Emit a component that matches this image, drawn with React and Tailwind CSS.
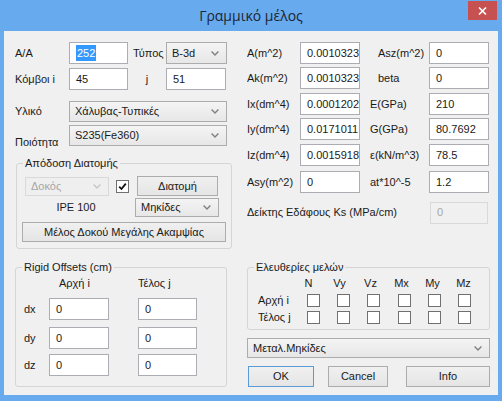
import React from 'react'

const ui = "font-['Liberation_Sans',Arial,sans-serif] text-[11px] text-[#1a1a1a]"

function Chevron({ disabled }) {
  return (
    <svg width="8" height="5" viewBox="0 0 8 5" className="shrink-0">
      <path d="M0.6 0.6 L4 4 L7.4 0.6" fill="none" stroke={disabled ? '#c6c6c6' : '#808080'} strokeWidth="1.4" />
    </svg>
  )
}

function Combo({ value, className = '', disabled }) {
  return (
    <div
      className={`flex items-center justify-between border pl-[5px] pr-[7px] whitespace-nowrap ${
        disabled
          ? 'border-[#d9d9d9] bg-[#efefef] text-[#a6a6a6]'
          : 'border-[#acacac] bg-gradient-to-b from-[#f4f4f4] to-[#e7e7e7]'
      } ${className}`}
    >
      <span>{value}</span>
      <Chevron disabled={disabled} />
    </div>
  )
}

function Input({ value, className = '', disabled, children }) {
  return (
    <div
      className={`flex items-center border pl-[6px] h-[22px] whitespace-nowrap ${
        disabled ? 'border-[#d9d9d9] bg-[#f0f0f0] text-[#a6a6a6]' : 'border-[#abadb3] bg-white'
      } ${className}`}
    >
      {children ?? value}
    </div>
  )
}

function Button({ label, className = '', primary }) {
  return (
    <div
      className={`flex items-center justify-center border bg-gradient-to-b from-[#f0f0f0] to-[#e5e5e5] whitespace-nowrap ${
        primary ? 'border-[#5b9bd5]' : 'border-[#acacac]'
      } ${className}`}
    >
      {label}
    </div>
  )
}

function Check({ checked }) {
  return (
    <div className="w-[13px] h-[13px] border border-[#707070] bg-white flex items-center justify-center shrink-0">
      {checked && (
        <svg width="9" height="9" viewBox="0 0 9 9">
          <path d="M1.2 4.6 L3.5 7 L7.8 1.6" fill="none" stroke="#111" strokeWidth="1.8" />
        </svg>
      )}
    </div>
  )
}

function Group({ title, className = '', children }) {
  return (
    <div className={`relative border border-[#d5d5d5] rounded-[3px] ${className}`}>
      <span className="absolute left-[6px] top-[-8px] px-[2px] bg-[#f0f0f0] leading-[14px] whitespace-nowrap">{title}</span>
      {children}
    </div>
  )
}

const props = [
  { l: 'A(m^2)', v: '0.0010323', l2: 'Asz(m^2)', v2: '0', pad: 'pl-[18px]', mt: 'mt-[11px]' },
  { l: 'Ak(m^2)', v: '0.0010323', l2: 'beta', v2: '0', pad: 'pl-[18px]', mt: 'mt-[3px]' },
  { l: 'Ix(dm^4)', v: '0.0001202', l2: 'E(GPa)', v2: '210', pad: 'pl-[10px]', mt: 'mt-[4px]' },
  { l: 'Iy(dm^4)', v: '0.0171011', l2: 'G(GPa)', v2: '80.7692', pad: 'pl-[10px]', mt: 'mt-[3px]' },
  { l: 'Iz(dm^4)', v: '0.0015918', l2: 'ε(kN/m^3)', v2: '78.5', pad: 'pl-[10px]', mt: 'mt-[4px]' },
  { l: 'Asy(m^2)', v: '0', l2: 'at*10^-5', v2: '1.2', pad: 'pl-[10px]', mt: 'mt-[5px]' },
]

const dofs = ['N', 'Vy', 'Vz', 'Mx', 'My', 'Mz']

export default function App() {
  return (
    <div className={`w-[502px] h-[401px] bg-[#68aaee] flex flex-col overflow-hidden ${ui}`}>
      {/* title bar */}
      <div className="relative h-[31px] flex items-center justify-center">
        <span className="font-['Open_Sans',sans-serif] text-[14px] text-[#1b2633] pb-[1px]">Γραμμικό μέλος</span>
        <div className="absolute right-[5px] top-[1px] w-[29px] h-[19px] bg-[#c75050] flex items-center justify-center">
          <svg width="9" height="8" viewBox="0 0 9 8">
            <path d="M1 0.5 L8 7.5 M8 0.5 L1 7.5" stroke="#fff" strokeWidth="1.6" />
          </svg>
        </div>
      </div>

      {/* client area */}
      <div className="mx-[4px] h-[364px] bg-[#f0f0f0] flex">
        {/* left column */}
        <div className="w-[243px] flex flex-col">
          <div className="mt-[11px] h-[22px] pl-[11px] flex items-center">
            <span className="w-[54px]">A/A</span>
            <Input className="w-[59px] border-[#569de5] pl-[5px]">
              <span className="bg-[#3399ff] text-white px-[1px]">252</span>
            </Input>
            <span className="ml-[5px] w-[33px]">Τύπος</span>
            <Combo value="B-3d" className="w-[61px] h-[22px]" />
          </div>
          <div className="mt-[4px] h-[22px] pl-[11px] flex items-center">
            <span className="w-[54px]">Κόμβοι i</span>
            <Input value="45" className="w-[59px]" />
            <span className="w-[38px] text-center">j</span>
            <Input value="51" className="w-[60px]" />
          </div>
          <div className="mt-[11px] h-[21px] pl-[11px] flex items-center">
            <span className="w-[54px]">Υλικό</span>
            <Combo value="Χάλυβας-Τυπικές" className="w-[158px] h-[21px]" />
          </div>
          <div className="mt-[3px] h-[21px] pl-[11px] flex items-start">
            <span className="w-[54px] pt-[10px] leading-[14px]">Ποιότητα</span>
            <Combo value="S235(Fe360)" className="w-[158px] h-[21px]" />
          </div>

          <Group title="Απόδοση Διατομής" className="mt-[17px] ml-[12px] w-[216px] h-[86px]">
            <div className="mt-[12px] h-[20px] pl-[8px] flex items-center">
              <Combo value="Δοκός" disabled className="w-[84px] h-[19px]" />
              <div className="ml-[7px]">
                <Check checked />
              </div>
              <Button label="Διατομή" className="ml-[8px] w-[81px] h-[20px]" />
            </div>
            <div className="mt-[2px] h-[19px] flex items-center">
              <span className="w-[118px] text-center">IPE 100</span>
              <Combo value="Μηκίδες" className="w-[84px] h-[19px]" />
            </div>
            <Button label="Μέλος Δοκού Μεγάλης Ακαμψίας" className="mt-[5px] ml-[5px] w-[204px] h-[20px]" />
          </Group>

          <Group title="Rigid Offsets (cm)" className="mt-[18px] ml-[11px] w-[212px] h-[120px]">
            <div className="mt-[8px] h-[14px] leading-[14px] flex">
              <span className="ml-[43px] w-[79px]">Αρχή i</span>
              <span>Τέλος j</span>
            </div>
            {[
              ['dx', 'mt-[8px]'],
              ['dy', 'mt-[7px]'],
              ['dz', 'mt-[5px]'],
            ].map(([l, mt]) => (
              <div key={l} className={`${mt} h-[22px] flex items-center`}>
                <span className="w-[33px] pl-[8px]">{l}</span>
                <Input value="0" className="w-[60px]" />
                <Input value="0" className="ml-[29px] w-[59px]" />
              </div>
            ))}
          </Group>
        </div>

        {/* right column */}
        <div className="w-[251px] flex flex-col">
          {props.map((p) => (
            <div key={p.l} className={`${p.mt} h-[22px] flex items-center`}>
              <span className="w-[53px] overflow-hidden whitespace-nowrap">{p.l}</span>
              <Input value={p.v} className="w-[60px] pl-[5px]" />
              <span className={`w-[69px] ${p.pad} whitespace-nowrap`}>{p.l2}</span>
              <Input value={p.v2} className="w-[60px]" />
            </div>
          ))}
          <div className="mt-[9px] h-[21px] flex items-center">
            <span className="w-[183px] whitespace-nowrap">Δείκτης Εδάφους Ks (MPa/cm)</span>
            <Input value="0" disabled className="w-[58px] h-[21px]" />
          </div>

          <Group title="Ελευθερίες μελών" className="mt-[44px] w-[243px] h-[63px]">
            <div className="mt-[7px] h-[16px] leading-[16px] flex">
              <span className="w-[45px]" />
              {dofs.map((d) => (
                <span key={d} className="w-[31px] text-center">{d}</span>
              ))}
            </div>
            {[
              ['Αρχή i', 'mt-[3px]'],
              ['Τέλος j', 'mt-[4px]'],
            ].map(([l, mt]) => (
              <div key={l} className={`${mt} h-[13px] flex items-center`}>
                <span className="w-[59px] pl-[10px] whitespace-nowrap">{l}</span>
                {dofs.map((d) => (
                  <div key={d} className="w-[30.2px]">
                    <Check />
                  </div>
                ))}
              </div>
            ))}
          </Group>

          <Combo value="Μεταλ.Μηκίδες" className="mt-[8px] w-[243px] h-[20px]" />

          <div className="mt-[8px] h-[21px] flex">
            <Button label="OK" primary className="ml-[1px] w-[66px]" />
            <Button label="Cancel" className="ml-[14px] w-[60px]" />
            <Button label="Info" className="ml-[18px] w-[84px]" />
          </div>
        </div>
      </div>
    </div>
  )
}
